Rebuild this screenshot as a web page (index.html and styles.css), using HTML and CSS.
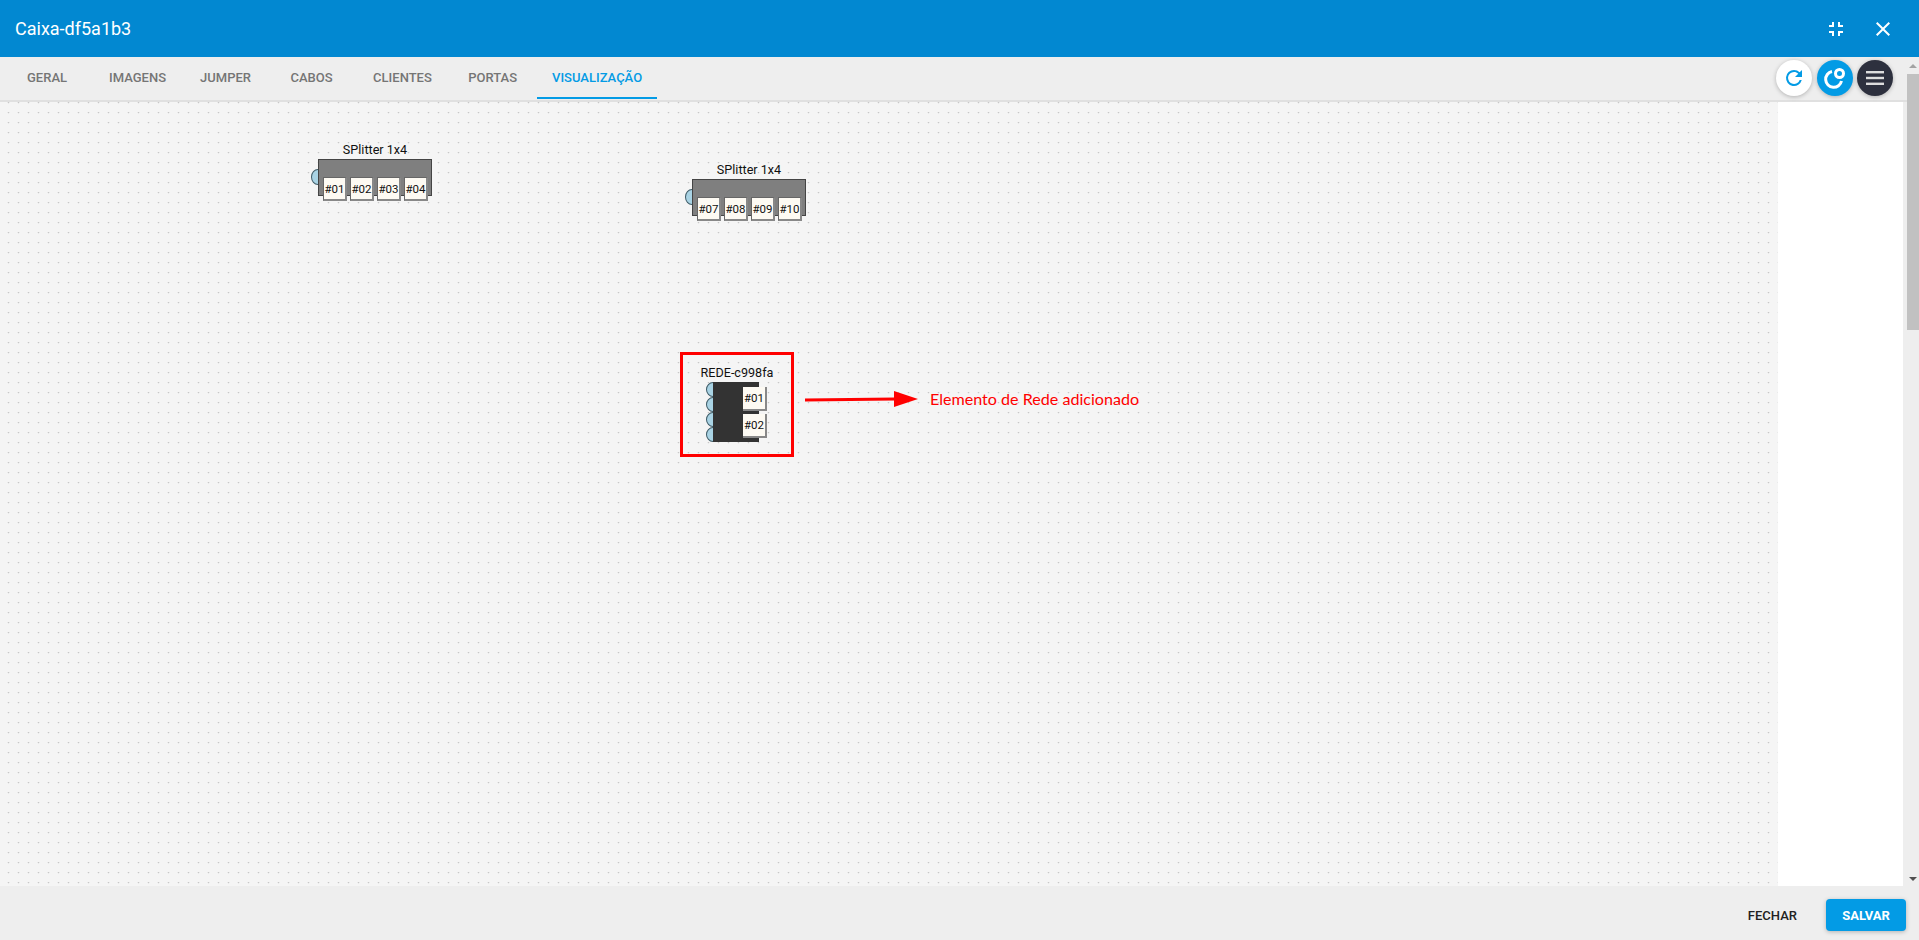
FILE: index.html
```html
<!DOCTYPE html>
<html lang="en">
<head>
    <meta charset="UTF-8">
    <title>Caixa-df5a1b3</title>
    <link rel="stylesheet" href="styles.css">
</head>
<body>
    <header class="topbar">
        <h1>Caixa-df5a1b3</h1>
        <div class="top-icons">
            <svg width="24" height="24" viewBox="0 0 24 24" fill="#fff"><path d="M5 16h3v3h2v-5H5v2zm3-8H5v2h5V5H8v3zm6 11h2v-3h3v-2h-5v5zm2-11V5h-2v5h5V8h-3z"/></svg>
            <svg width="24" height="24" viewBox="0 0 24 24" fill="#fff"><path d="M19 6.41 17.59 5 12 10.59 6.41 5 5 6.41 10.59 12 5 17.59 6.41 19 12 13.41 17.59 19 19 17.59 13.41 12z"/></svg>
        </div>
    </header>

    <div class="content">
        <div class="inner">
            <nav class="tabs">
                <a class="tab">GERAL</a>
                <a class="tab">IMAGENS</a>
                <a class="tab">JUMPER</a>
                <a class="tab">CABOS</a>
                <a class="tab">CLIENTES</a>
                <a class="tab">PORTAS</a>
                <a class="tab active">VISUALIZAÇÃO</a>
                <div class="round-btns">
                    <button class="round white">
                        <svg width="24" height="24" viewBox="0 0 24 24" fill="#039be5"><path d="M17.65 6.35A7.96 7.96 0 0 0 12 4a8 8 0 1 0 7.75 10h-2.08A6 6 0 1 1 12 6c1.66 0 3.14.69 4.22 1.78L13 11h7V4l-2.35 2.35z"/></svg>
                    </button>
                    <button class="round blue">
                        <svg width="26" height="26" viewBox="0 0 26 26" fill="none" stroke="#fff" stroke-width="3"><path d="M10 6.5A8 8 0 1 0 19.5 16"/><circle cx="17.5" cy="8.5" r="4"/></svg>
                    </button>
                    <button class="round dark">
                        <svg width="18" height="14" viewBox="0 0 18 14" fill="#ddd"><rect y="0" width="18" height="2.4"/><rect y="5.8" width="18" height="2.4"/><rect y="11.6" width="18" height="2.4"/></svg>
                    </button>
                </div>
            </nav>

            <main class="workspace">
                <div class="canvas">
                    <div class="node splitter s1">
                        <span class="node-name">SPlitter 1x4</span>
                        <div class="splitter-body">
                            <i class="input"></i>
                            <div class="ports"><b>#01</b><b>#02</b><b>#03</b><b>#04</b></div>
                        </div>
                    </div>

                    <div class="node splitter s2">
                        <span class="node-name">SPlitter 1x4</span>
                        <div class="splitter-body">
                            <i class="input"></i>
                            <div class="ports"><b>#07</b><b>#08</b><b>#09</b><b>#10</b></div>
                        </div>
                    </div>

                    <div class="highlight"></div>
                    <div class="node rede">
                        <span class="node-name">REDE-c998fa</span>
                        <div class="rede-body">
                            <div class="inputs"><i></i><i></i><i></i><i></i></div>
                            <div class="rede-ports"><b>#01</b><b>#02</b></div>
                        </div>
                    </div>

                    <svg class="arrow" width="115" height="18" viewBox="0 0 115 18"><path d="M0 10 L90 9" stroke="#f00" stroke-width="3"/><path d="M89 1 L113 9 L89 17z" fill="#f00"/></svg>
                    <span class="note">Elemento de Rede adicionado</span>
                </div>
                <aside class="side"></aside>
            </main>
        </div>
        <div class="scroll">
            <span class="up"></span>
            <span class="thumb"></span>
            <span class="down"></span>
        </div>
    </div>

    <footer class="bottom">
        <button class="btn-text">FECHAR</button>
        <button class="btn-save">SALVAR</button>
    </footer>
</body>
</html>
```

FILE: styles.css
```css
* { box-sizing: border-box; }
html, body { height: 100%; }
body { margin: 0; display: flex; flex-direction: column; height: 940px; overflow: hidden; font-family: Roboto, sans-serif; background: #eee; }

.topbar { height: 57px; background: #0288d1; color: #fff; display: flex; align-items: center; justify-content: space-between; padding: 0 24px 0 15px; }
.topbar h1 { margin: 0 0 1px; font-size: 18px; font-weight: 400; }
.top-icons { display: flex; gap: 23px; }

.content { height: 829px; display: flex; }
.inner { width: 1907px; }

.tabs { height: 45px; display: flex; background: #eee; border-bottom: 2px solid #e0e0e0; padding-left: 10px; position: relative; }
.tab { height: 42px; padding: 0 17px; display: flex; align-items: center; font-size: 13px; font-weight: 500; color: #757575; border-bottom: 2px solid transparent; }
.tab:nth-child(1) { margin-right: 8px; }
.tab:nth-child(3) { margin-right: 5.5px; }
.tab:nth-child(4) { margin-right: 6.5px; }
.tab:nth-child(5) { margin-right: 2.4px; }
.tab:nth-child(6) { margin-right: 3px; }
.tab.active { color: #039be5; border-bottom-color: #039be5; padding: 0 15px; }
.round-btns { position: absolute; right: 14px; top: 3px; display: flex; gap: 4px; }
.round { width: 36px; height: 36px; border: none; border-radius: 50%; padding: 0; display: flex; align-items: center; justify-content: center; box-shadow: 0 1px 4px rgba(0,0,0,.25); }
.round.white { background: #fff; margin-right: 1px; }
.round.blue { background: #039be5; }
.round.dark { background: #2d303e; }

.workspace { height: 784px; display: flex; padding-right: 4px; }
.canvas { width: 1778px; position: relative; background-color: #f5f5f5; background-image: radial-gradient(circle at 8.5px 0.5px, #c8c8c8 0.7px, transparent 1.1px); background-size: 10px 10px; overflow: hidden; }
.side { width: 125px; background: #fff; }

.scroll { width: 12px; background: #eee; display: flex; flex-direction: column; align-items: center; }
.scroll .up { border: 4px solid transparent; border-bottom: 4px solid #a3a3a3; border-top: 0; margin: 7px 0 6px; }
.scroll .thumb { width: 12px; height: 256px; background: #c1c1c1; }
.scroll .down { margin-top: auto; margin-bottom: 5px; border: 4px solid transparent; border-top: 4px solid #505050; border-bottom: 0; }

.node { position: absolute; }
.node-name { display: block; text-align: center; font-size: 12.6px; color: #111; line-height: 14px; padding-top: 1px; }
.node b { font-weight: 400; font-size: 11.5px; color: #111; background: #fdfaf3; display: flex; align-items: center; justify-content: center; border: 1px solid #666; border-width: 1px 2px 2px 1px; border-color: #666 #888 #888 #666; }

.s1 { left: 318px; top: 40px; width: 114px; }
.s2 { left: 692px; top: 60px; width: 114px; }
.splitter-body { position: relative; height: 37px; margin-top: 2px; background: #7f7f7f; border: 1px solid #444; }
.input { position: absolute; left: -8px; top: 9px; width: 14px; height: 16px; background: #a9d3e4; border: 1px solid #3d5a66; border-radius: 50%; clip-path: inset(0 7px 0 0); }
.ports { position: absolute; left: 4px; top: 17px; display: flex; gap: 3px; }
.ports b { width: 24px; height: 24px; }

.highlight { position: absolute; left: 680px; top: 250px; width: 114px; height: 105px; border: 3px solid #f00; }
.rede { left: 695px; top: 264px; width: 84px; }
.rede .node-name { white-space: nowrap; padding-top: 0; }
.rede-body { position: relative; width: 46px; height: 60px; margin: 2px 0 0 18px; background: #333; border: 1px solid #333; }
.inputs { position: absolute; left: -8px; top: -1px; display: flex; flex-direction: column; }
.inputs i { width: 14px; height: 15px; background: #a9d3e4; border: 1px solid #3d5a66; border-radius: 50%; clip-path: inset(0 7px 0 0); }
.rede-ports { position: absolute; left: 29px; top: 4px; display: flex; flex-direction: column; gap: 3px; }
.rede-ports b { width: 24px; height: 24px; border-left: none; border-top: none; }

.arrow { position: absolute; left: 805px; top: 288px; }
.note { position: absolute; left: 930px; top: 287px; font-family: Lato, sans-serif; font-size: 16.1px; color: #f00; }

.bottom { height: 54px; background: #eee; display: flex; align-items: center; justify-content: flex-end; padding: 4px 13px 0 0; }
button { font-family: Roboto, sans-serif; }
.btn-text { background: none; border: none; font-size: 13px; font-weight: 500; color: #212121; margin-right: 29px; padding: 0; }
.btn-save { width: 80px; height: 32px; background: #039be5; color: #fff; border: none; border-radius: 4px; font-size: 13px; font-weight: 700; box-shadow: 0 1px 4px rgba(0,0,0,.25); }
```
